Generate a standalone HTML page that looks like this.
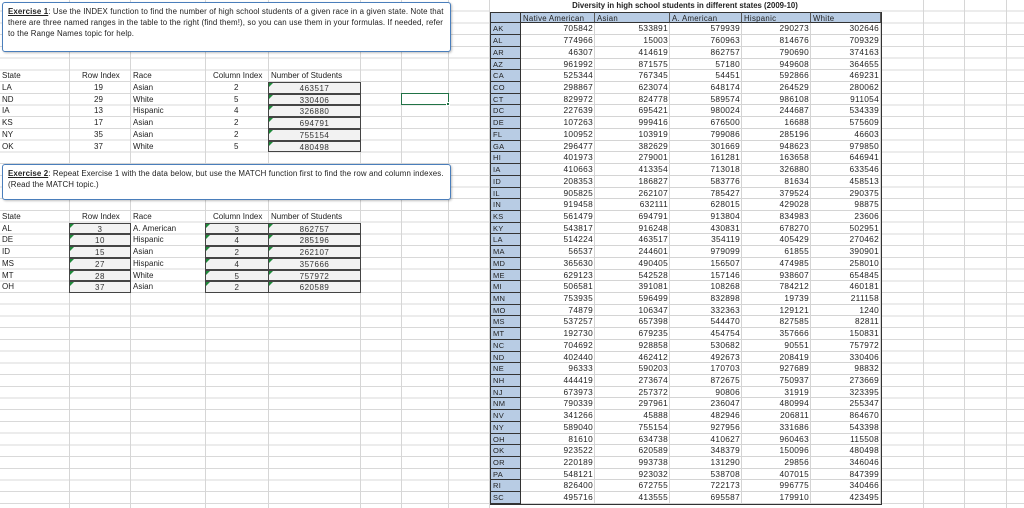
<!DOCTYPE html>
<html><head><meta charset="utf-8"><style>
*{margin:0;padding:0;box-sizing:border-box}
body{width:1024px;height:508px;overflow:hidden;background:#fff;position:relative;font-family:"Liberation Sans",Arial,sans-serif;font-size:8px;color:#222;
background-image:repeating-linear-gradient(to bottom,transparent 0,transparent 10.72px,#d9d9d9 10.72px,#d9d9d9 11.72px);}
.v{position:absolute;top:0;height:508px;width:1px;background:#d6d6d6}
.c{position:absolute;height:11.72px;line-height:11.72px;white-space:nowrap;top:calc(var(--r)*11.72px)}
.box{position:absolute;left:2px;width:449px;background:#fff;border:1.5px solid #4a7ebb;border-radius:3px;box-shadow:1px 1px 2px rgba(0,0,0,.25);padding:3px 5px;font-size:7.9px;letter-spacing:.12px;line-height:11px;color:#222}
.g{background:#f2f2f2;border:1px solid #444;text-align:center;letter-spacing:.5px;color:#333}
.g::before{content:"";position:absolute;left:0;top:0;border-top:4px solid #1e8a3a;border-right:4px solid transparent}
#rt{position:absolute;left:490px;top:11.72px;display:grid;grid-template-columns:31px 74px 75px 72px 69px 70px;grid-auto-rows:11.72px;background:#fff;border-right:1px solid #333;border-bottom:1px solid #333}
#rt div{border-right:1px solid #d4d4d4;border-bottom:1px solid #d4d4d4;text-align:right;padding-right:1px;line-height:11px;font-size:8.3px;letter-spacing:.3px;color:#222}
#rt div.s{background:#b8cce4;text-align:left;padding-left:2px;border-right:1px solid #333;border-left:1px solid #333;border-bottom:1px solid #333;font-size:7.5px}
#rt div.h{background:#b8cce4;text-align:left;padding-left:2px;border-right:1px solid #555;border-top:1px solid #333;border-bottom:1px solid #333;font-size:7.8px}
</style></head><body>
<div class="v" style="left:69px"></div><div class="v" style="left:130px"></div><div class="v" style="left:205px"></div><div class="v" style="left:268px"></div><div class="v" style="left:360px"></div><div class="v" style="left:401px"></div><div class="v" style="left:448px"></div><div class="v" style="left:489px"></div><div class="v" style="left:923px"></div><div class="v" style="left:964px"></div><div class="v" style="left:1006px"></div>

<div class="box" style="top:2px;height:50px"><b><u>Exercise 1</u></b>: Use the INDEX function to find the number of high school  students of a given race in a given state. Note that there are three named ranges in the table to the right (find them!), so you can use them in your formulas.  If needed, refer to the Range Names topic for help.</div>
<div class="box" style="top:164px;height:36px"><b><u>Exercise 2</u></b>: Repeat Exercise 1 with the data below, but use the MATCH  function first to find the row and column indexes. (Read the MATCH topic.)</div>

<div class="c" style="--r:6;left:2px">State</div><div class="c" style="--r:6;left:82px">Row Index</div><div class="c" style="--r:6;left:133px">Race</div><div class="c" style="--r:6;left:213px">Column Index</div><div class="c" style="--r:6;left:271px">Number of Students</div>
<div class="c" style="--r:7;left:2px">LA</div><div class="c" style="--r:7;left:94px">19</div><div class="c" style="--r:7;left:133px">Asian</div><div class="c" style="--r:7;left:234px">2</div>
<div class="c" style="--r:8;left:2px">ND</div><div class="c" style="--r:8;left:94px">29</div><div class="c" style="--r:8;left:133px">White</div><div class="c" style="--r:8;left:234px">5</div>
<div class="c" style="--r:9;left:2px">IA</div><div class="c" style="--r:9;left:94px">13</div><div class="c" style="--r:9;left:133px">Hispanic</div><div class="c" style="--r:9;left:234px">4</div>
<div class="c" style="--r:10;left:2px">KS</div><div class="c" style="--r:10;left:94px">17</div><div class="c" style="--r:10;left:133px">Asian</div><div class="c" style="--r:10;left:234px">2</div>
<div class="c" style="--r:11;left:2px">NY</div><div class="c" style="--r:11;left:94px">35</div><div class="c" style="--r:11;left:133px">Asian</div><div class="c" style="--r:11;left:234px">2</div>
<div class="c" style="--r:12;left:2px">OK</div><div class="c" style="--r:12;left:94px">37</div><div class="c" style="--r:12;left:133px">White</div><div class="c" style="--r:12;left:234px">5</div>
<div class="c g" style="--r:7;left:268px;width:93px">463517</div>
<div class="c g" style="--r:8;left:268px;width:93px">330406</div>
<div class="c g" style="--r:9;left:268px;width:93px">326880</div>
<div class="c g" style="--r:10;left:268px;width:93px">694791</div>
<div class="c g" style="--r:11;left:268px;width:93px">755154</div>
<div class="c g" style="--r:12;left:268px;width:93px">480498</div>
<div style="position:absolute;left:401px;top:92.5px;width:48px;height:12.5px;border:1.5px solid #217346"></div>
<div style="position:absolute;left:446px;top:102px;width:4px;height:4px;background:#217346;border:1px solid #fff"></div>

<div class="c" style="--r:18;left:2px">State</div><div class="c" style="--r:18;left:82px">Row Index</div><div class="c" style="--r:18;left:133px">Race</div><div class="c" style="--r:18;left:213px">Column Index</div><div class="c" style="--r:18;left:271px">Number of Students</div>
<div class="c" style="--r:19;left:2px">AL</div><div class="c" style="--r:19;left:133px">A. American</div>
<div class="c" style="--r:20;left:2px">DE</div><div class="c" style="--r:20;left:133px">Hispanic</div>
<div class="c" style="--r:21;left:2px">ID</div><div class="c" style="--r:21;left:133px">Asian</div>
<div class="c" style="--r:22;left:2px">MS</div><div class="c" style="--r:22;left:133px">Hispanic</div>
<div class="c" style="--r:23;left:2px">MT</div><div class="c" style="--r:23;left:133px">White</div>
<div class="c" style="--r:24;left:2px">OH</div><div class="c" style="--r:24;left:133px">Asian</div>
<div class="c g" style="--r:19;left:69px;width:62px">3</div><div class="c g" style="--r:19;left:205px;width:64px">3</div><div class="c g" style="--r:19;left:268px;width:93px">862757</div>
<div class="c g" style="--r:20;left:69px;width:62px">10</div><div class="c g" style="--r:20;left:205px;width:64px">4</div><div class="c g" style="--r:20;left:268px;width:93px">285196</div>
<div class="c g" style="--r:21;left:69px;width:62px">15</div><div class="c g" style="--r:21;left:205px;width:64px">2</div><div class="c g" style="--r:21;left:268px;width:93px">262107</div>
<div class="c g" style="--r:22;left:69px;width:62px">27</div><div class="c g" style="--r:22;left:205px;width:64px">4</div><div class="c g" style="--r:22;left:268px;width:93px">357666</div>
<div class="c g" style="--r:23;left:69px;width:62px">28</div><div class="c g" style="--r:23;left:205px;width:64px">5</div><div class="c g" style="--r:23;left:268px;width:93px">757972</div>
<div class="c g" style="--r:24;left:69px;width:62px">37</div><div class="c g" style="--r:24;left:205px;width:64px">2</div><div class="c g" style="--r:24;left:268px;width:93px">620589</div>

<div class="c" style="--r:0;left:490px;width:390px;text-align:center;font-weight:bold;font-size:7.8px;background:#fff">Diversity in high school students in different states (2009-10)</div>

<div id="rt">
<div class="s" style="border-top:1px solid #333"></div><div class="h">Native American</div><div class="h">Asian</div><div class="h">A. American</div><div class="h">Hispanic</div><div class="h">White</div>
<div class="s">AK</div><div>705842</div><div>533891</div><div>579939</div><div>290273</div><div>302646</div>
<div class="s">AL</div><div>774966</div><div>15003</div><div>760963</div><div>814676</div><div>709329</div>
<div class="s">AR</div><div>46307</div><div>414619</div><div>862757</div><div>790690</div><div>374163</div>
<div class="s">AZ</div><div>961992</div><div>871575</div><div>57180</div><div>949608</div><div>364655</div>
<div class="s">CA</div><div>525344</div><div>767345</div><div>54451</div><div>592866</div><div>469231</div>
<div class="s">CO</div><div>298867</div><div>623074</div><div>648174</div><div>264529</div><div>280062</div>
<div class="s">CT</div><div>829972</div><div>824778</div><div>589574</div><div>986108</div><div>911054</div>
<div class="s">DC</div><div>227639</div><div>695421</div><div>980024</div><div>244687</div><div>534339</div>
<div class="s">DE</div><div>107263</div><div>999416</div><div>676500</div><div>16688</div><div>575609</div>
<div class="s">FL</div><div>100952</div><div>103919</div><div>799086</div><div>285196</div><div>46603</div>
<div class="s">GA</div><div>296477</div><div>382629</div><div>301669</div><div>948623</div><div>979850</div>
<div class="s">HI</div><div>401973</div><div>279001</div><div>161281</div><div>163658</div><div>646941</div>
<div class="s">IA</div><div>410663</div><div>413354</div><div>713018</div><div>326880</div><div>633546</div>
<div class="s">ID</div><div>208353</div><div>186827</div><div>583776</div><div>81634</div><div>458513</div>
<div class="s">IL</div><div>905825</div><div>262107</div><div>785427</div><div>379524</div><div>290375</div>
<div class="s">IN</div><div>919458</div><div>632111</div><div>628015</div><div>429028</div><div>98875</div>
<div class="s">KS</div><div>561479</div><div>694791</div><div>913804</div><div>834983</div><div>23606</div>
<div class="s">KY</div><div>543817</div><div>916248</div><div>430831</div><div>678270</div><div>502951</div>
<div class="s">LA</div><div>514224</div><div>463517</div><div>354119</div><div>405429</div><div>270462</div>
<div class="s">MA</div><div>56537</div><div>244601</div><div>979099</div><div>61855</div><div>390901</div>
<div class="s">MD</div><div>365630</div><div>490405</div><div>156507</div><div>474985</div><div>258010</div>
<div class="s">ME</div><div>629123</div><div>542528</div><div>157146</div><div>938607</div><div>654845</div>
<div class="s">MI</div><div>506581</div><div>391081</div><div>108268</div><div>784212</div><div>460181</div>
<div class="s">MN</div><div>753935</div><div>596499</div><div>832898</div><div>19739</div><div>211158</div>
<div class="s">MO</div><div>74879</div><div>106347</div><div>332363</div><div>129121</div><div>1240</div>
<div class="s">MS</div><div>537257</div><div>657398</div><div>544470</div><div>827585</div><div>82811</div>
<div class="s">MT</div><div>192730</div><div>679235</div><div>454754</div><div>357666</div><div>150831</div>
<div class="s">NC</div><div>704692</div><div>928858</div><div>530682</div><div>90551</div><div>757972</div>
<div class="s">ND</div><div>402440</div><div>462412</div><div>492673</div><div>208419</div><div>330406</div>
<div class="s">NE</div><div>96333</div><div>590203</div><div>170703</div><div>927689</div><div>98832</div>
<div class="s">NH</div><div>444419</div><div>273674</div><div>872675</div><div>750937</div><div>273669</div>
<div class="s">NJ</div><div>673973</div><div>257372</div><div>90806</div><div>31919</div><div>323395</div>
<div class="s">NM</div><div>790339</div><div>297961</div><div>236047</div><div>480994</div><div>255347</div>
<div class="s">NV</div><div>341266</div><div>45888</div><div>482946</div><div>206811</div><div>864670</div>
<div class="s">NY</div><div>589040</div><div>755154</div><div>927956</div><div>331686</div><div>543398</div>
<div class="s">OH</div><div>81610</div><div>634738</div><div>410627</div><div>960463</div><div>115508</div>
<div class="s">OK</div><div>923522</div><div>620589</div><div>348379</div><div>150096</div><div>480498</div>
<div class="s">OR</div><div>220189</div><div>993738</div><div>131290</div><div>29856</div><div>346046</div>
<div class="s">PA</div><div>548121</div><div>923032</div><div>538708</div><div>407015</div><div>847399</div>
<div class="s">RI</div><div>826400</div><div>672755</div><div>722173</div><div>996775</div><div>340466</div>
<div class="s">SC</div><div>495716</div><div>413555</div><div>695587</div><div>179910</div><div>423495</div>
</div>
</body></html>
